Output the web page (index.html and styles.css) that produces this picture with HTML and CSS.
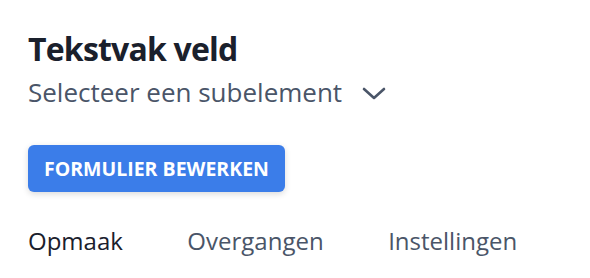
FILE: index.html
```html
<!DOCTYPE html>
<html lang="nl">
<head>
<meta charset="utf-8">
<link rel="stylesheet" href="styles.css">
</head>
<body>
<div class="panel">
  <h1 class="title">Tekstvak veld</h1>
  <div class="select">
    <span>Selecteer een subelement</span>
    <svg class="chev" width="24" height="13" viewBox="0 0 24 13"><path d="M2 2 L12 11 L22 2" fill="none" stroke="currentColor" stroke-width="2.6" stroke-linecap="round" stroke-linejoin="round"/></svg>
  </div>
  <button class="btn">FORMULIER BEWERKEN</button>
  <nav class="tabs">
    <span class="tab active">Opmaak</span>
    <span class="tab">Overgangen</span>
    <span class="tab">Instellingen</span>
  </nav>
</div>
</body>
</html>
```
FILE: styles.css
```css
html, body { margin: 0; padding: 0; background: #fff; }
body { font-family: "Open Sans", sans-serif; width: 590px; height: 278px; overflow: hidden; }
.panel { padding: 28px 28px 0; }
.title { margin: 0; font-size: 32px; letter-spacing: -0.8px; font-weight: 700; color: #1a202c; line-height: 42px; }
.select { display: flex; align-items: center; gap: 20px; color: #4a5568; font-size: 26px; line-height: 34px; margin-top: 5px; }
.chev { color: #4a5568; margin-top: 3px; }
.btn { display: block; margin-top: 36px; background: #3b7de9; color: #fff; border: 0; border-radius: 6px; font-family: inherit; font-weight: 700; font-size: 19.5px; padding: 0 16px; height: 47px; box-shadow: 0 2px 6px rgba(0,0,0,0.15); }
.tabs { display: flex; gap: 64.5px; margin-top: 33px; font-size: 24px; line-height: 32px; }
.tab { color: #4a5568; }
.tab.active { color: #1a202c; }
```
